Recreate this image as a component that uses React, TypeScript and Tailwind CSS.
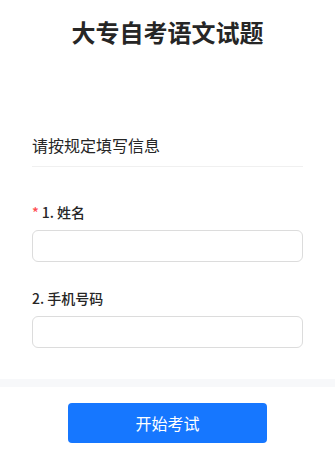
export default function App() {
  return (
    <div
      className="w-[335px] h-[460px] bg-white flex flex-col text-[#262626]"
      style={{ fontFamily: '"Noto Sans CJK SC", "Noto Sans", sans-serif' }}
    >
      <h1 className="mt-[16px] text-center text-[24px] leading-[32px] font-bold text-[#262626]">
        大专自考语文试题
      </h1>

      <div className="px-[32px] mt-[85px]">
        <div className="text-[16px] leading-[24px] pb-[9px] border-b border-[#f0f0f0]">
          请按规定填写信息
        </div>

        <div className="mt-[35px]">
          <div className="flex items-center text-[14px] leading-[20px] font-medium">
            <span className="text-[#ff4d4f] mr-[3px]">*</span>
            <span>1. 姓名</span>
          </div>
          <input className="mt-[8px] w-full h-[32px] rounded-[6px] border border-[#dcdcdc] outline-none px-[11px]" />
        </div>

        <div className="mt-[26px]">
          <div className="text-[14px] leading-[20px] font-medium">2. 手机号码</div>
          <input className="mt-[8px] w-full h-[32px] rounded-[6px] border border-[#dcdcdc] outline-none px-[11px]" />
        </div>
      </div>

      <div className="mt-[31px] h-[8px] bg-[#f7f8fa]" />

      <div className="flex justify-center pt-[16px]">
        <button className="w-[199px] h-[40px] rounded-[4px] bg-[#1677ff] text-white text-[16px]">
          开始考试
        </button>
      </div>
    </div>
  );
}
